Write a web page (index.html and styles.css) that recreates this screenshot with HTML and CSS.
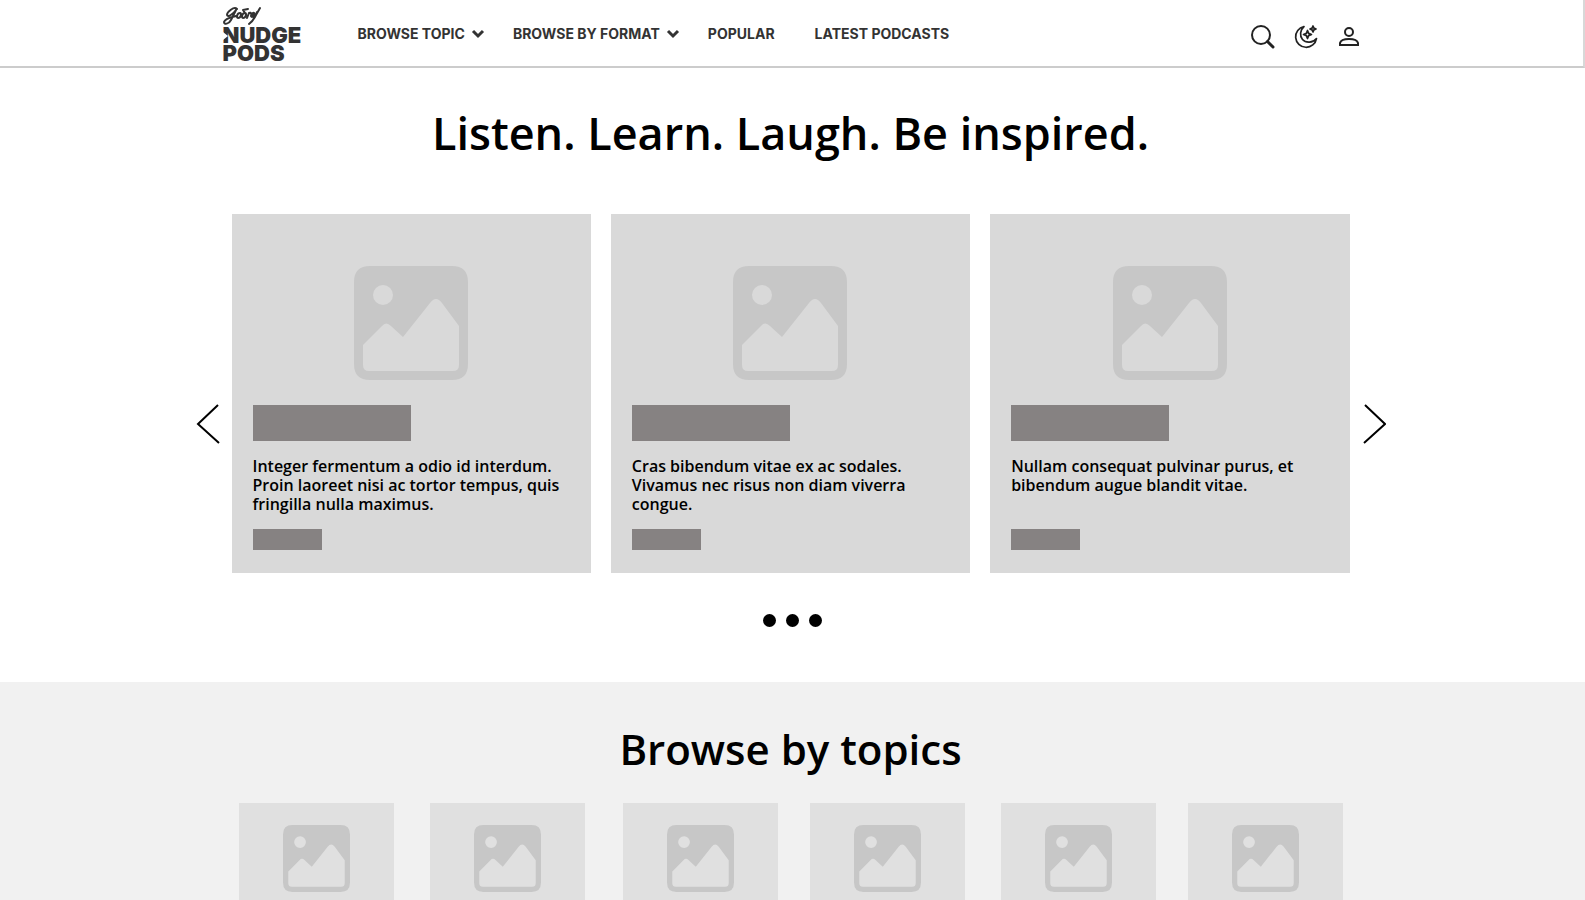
FILE: index.html
```html
<!DOCTYPE html>
<html lang="en">
<head>
<meta charset="utf-8">
<meta name="viewport" content="width=device-width, initial-scale=1">
<title>Nudge Pods</title>
<link rel="stylesheet" href="styles.css">
</head>
<body>
<svg class="defs" aria-hidden="true">
  <symbol id="picture" viewBox="0 0 114 114">
    <path fill="#c7c7c7" fill-rule="evenodd" d="M16 0H98Q114 0 114 16V98Q114 114 98 114H16Q0 114 0 98V16Q0 0 16 0ZM29 19a10 10 0 1 0 0 20a10 10 0 1 0 0-20ZM9 79L28 60Q32 55 37 60L49 71L76 37Q82 29 88 37L105 60V99Q105 105 99 105H15Q9 105 9 99Z"/>
  </symbol>
  <symbol id="caret" viewBox="0 0 14 10">
    <path d="M2 2L7 7L12 2" fill="none" stroke="#333" stroke-width="3"/>
  </symbol>
</svg>
<header class="header">
  <div class="header-inner">
    <a class="logo" href="#" aria-label="Godrej Nudge Pods">
      <svg class="signature" viewBox="0 0 38 20" aria-hidden="true">
        <path d="M14 3C11 0 4 6 4 9C5 12 11 7 13 4L8 14C6 18 1 19 1 16C2 12 9 11 13 10M17 7C14 7 13 12 15 12C18 12 19 7 17 7M22 7C19 7 18 12 20 12C23 12 24 7 22 7L20 4L25 3M24 12L26 7Q28 6 28 8M28 10Q32 8 31 7C29 6 27 11 29 11Q32 11 34 6M37 2L33 9Q30 15 26 18" fill="none" stroke="#333" stroke-width="2" stroke-linecap="round" stroke-linejoin="round"/>
      </svg>
      <span class="wordmark">NUDGE<br>PODS</span>
    </a>
    <nav class="nav" aria-label="Main">
      <button class="nav-item" type="button">BROWSE TOPIC <svg class="caret" aria-hidden="true"><use href="#caret"/></svg></button>
      <button class="nav-item" type="button">BROWSE BY FORMAT <svg class="caret" aria-hidden="true"><use href="#caret"/></svg></button>
      <a class="nav-item nav-link" href="#">POPULAR</a>
      <a class="nav-item nav-link" href="#">LATEST PODCASTS</a>
    </nav>
    <div class="tools">
      <button class="tool" type="button" aria-label="Search">
        <svg viewBox="0 0 24 24" aria-hidden="true"><circle cx="10" cy="10" r="9" fill="none" stroke="#222" stroke-width="2"/><path d="M16.500 16.500L22 22" stroke="#222" stroke-width="3" stroke-linecap="round"/></svg>
      </button>
      <button class="tool" type="button" aria-label="Dark mode">
        <svg viewBox="0 0 24 24" aria-hidden="true"><g fill="none" stroke="#222" stroke-width="1.700" stroke-linejoin="round"><path d="M10 1.500A10.500 10.500 0 1 0 22.500 13.500C19 18 12 18.500 8.500 14.500C5.500 11 6 5 10 1.500Z"/><path d="M13.500 5.500L14.600 8.400L17.500 9.500L14.600 10.600L13.500 13.500L12.400 10.600L9.500 9.500L12.400 8.400Z"/><path d="M19 1L19.900 3.100L22 4L19.900 4.900L19 7L18.100 4.900L16 4L18.100 3.100Z"/></g></svg>
      </button>
      <button class="tool" type="button" aria-label="Account">
        <svg viewBox="0 0 24 24" aria-hidden="true"><g fill="none" stroke="#222" stroke-width="2"><circle cx="12" cy="7" r="4"/><path d="M3 20V18Q4 14 12 14T21 18V20Z"/></g></svg>
      </button>
    </div>
  </div>
</header>
<main>
  <section class="featured">
    <h1 class="title">Listen. Learn. Laugh. Be inspired.</h1>
    <div class="carousel">
      <button class="arrow" type="button" aria-label="Previous"><svg viewBox="0 0 24 40" aria-hidden="true"><path d="M22 1L2 20L23 39" fill="none" stroke="#000" stroke-width="2"/></svg></button>
      <div class="cards">
        <article class="card">
          <svg class="card-picture" aria-hidden="true"><use href="#picture"/></svg>
          <div class="bar"></div>
          <p class="card-text">Integer fermentum a odio id interdum. Proin laoreet nisi ac tortor tempus, quis fringilla nulla maximus.</p>
          <div class="bar bar-small"></div>
        </article>
        <article class="card">
          <svg class="card-picture" aria-hidden="true"><use href="#picture"/></svg>
          <div class="bar"></div>
          <p class="card-text">Cras bibendum vitae ex ac sodales. Vivamus nec risus non diam viverra congue.</p>
          <div class="bar bar-small"></div>
        </article>
        <article class="card">
          <svg class="card-picture" aria-hidden="true"><use href="#picture"/></svg>
          <div class="bar"></div>
          <p class="card-text">Nullam consequat pulvinar purus, et bibendum augue blandit vitae.</p>
          <div class="bar bar-small"></div>
        </article>
      </div>
      <button class="arrow" type="button" aria-label="Next"><svg viewBox="0 0 24 40" aria-hidden="true"><path d="M3 1L23 20L2 39" fill="none" stroke="#000" stroke-width="2"/></svg></button>
    </div>
    <div class="dots">
      <button class="dot" type="button" aria-label="Slide 1"></button>
      <button class="dot" type="button" aria-label="Slide 2"></button>
      <button class="dot" type="button" aria-label="Slide 3"></button>
    </div>
  </section>
  <section class="topics">
    <h2 class="title title-small">Browse by topics</h2>
    <div class="topic-grid">
      <div class="topic"><svg class="topic-picture" aria-hidden="true"><use href="#picture"/></svg></div>
      <div class="topic"><svg class="topic-picture" aria-hidden="true"><use href="#picture"/></svg></div>
      <div class="topic"><svg class="topic-picture" aria-hidden="true"><use href="#picture"/></svg></div>
      <div class="topic"><svg class="topic-picture" aria-hidden="true"><use href="#picture"/></svg></div>
      <div class="topic"><svg class="topic-picture" aria-hidden="true"><use href="#picture"/></svg></div>
      <div class="topic"><svg class="topic-picture" aria-hidden="true"><use href="#picture"/></svg></div>
    </div>
  </section>
</main>
</body>
</html>
```
FILE: styles.css
```css
* { box-sizing: border-box; }
html { overflow: hidden; }
body {
  margin: 0;
  height: 100vh;
  overflow: hidden;
  background: #fff;
  color: #000;
  font-family: "Open Sans", sans-serif;
}
button { padding: 0; border: 0; background: none; font: inherit; color: inherit; cursor: pointer; }
.defs { display: none; }

.header { border-bottom: 2px solid #ccc; border-right: 2px solid #d8d8d8; }
.header-inner {
  display: flex;
  align-items: center;
  max-width: 1138px;
  height: 66px;
  margin: 0 auto;
}
.logo { width: 135px; padding-top: 2px; color: #333; text-decoration: none; }
.signature { display: block; width: 38px; height: 20px; }
.wordmark {
  display: block;
  position: relative;
  font: 900 22px/18px Inter, sans-serif;
}
/* Notch in the left stem of the N */
.wordmark::before {
  content: "";
  position: absolute;
  left: 0;
  top: 6px;
  border-left: 5px solid #fff;
  border-top: 4px solid transparent;
  border-bottom: 4px solid transparent;
}
.nav { display: flex; gap: 28px; flex: 1; padding-top: 1px; }
.nav-item {
  display: flex;
  align-items: center;
  gap: 6px;
  font: 700 14px/20px Inter, sans-serif;
  color: #333;
  text-decoration: none;
  white-space: nowrap;
}
.nav-link + .nav-link { margin-left: 12px; }
.caret { width: 14px; height: 10px; }
.tools { display: flex; gap: 19px; padding-top: 8px; }
.tool { width: 24px; height: 24px; }
.tool svg { display: block; width: 24px; height: 24px; }

.featured { padding: 31px 4px 55px 0; }
.title {
  margin: 0;
  text-align: center;
  font-size: 45px;
  line-height: 68px;
  font-weight: 600;
}
.carousel {
  display: flex;
  align-items: center;
  justify-content: center;
  gap: 12px;
  margin-top: 47px;
}
.arrow { width: 24px; height: 40px; margin-top: 60px; }
.arrow svg { display: block; width: 24px; height: 40px; }
.cards {
  display: grid;
  grid-template-columns: repeat(3, 1fr);
  gap: 20px;
  width: 1118px;
  max-width: 80%;
}
.card { padding: 52px 21px 23px; background: #d9d9d9; }
.card-picture { display: block; width: 114px; height: 114px; margin: 0 auto 25px; }
.bar { width: 158px; height: 36px; background: #868282; }
.bar-small { width: 69px; height: 21px; }
.card-text {
  min-height: 57px;
  margin: 16px 0 15px;
  font-size: 16px;
  line-height: 19px;
  font-weight: 600;
}
.dots { display: flex; justify-content: center; gap: 10px; margin: 41px 0 0 4px; }
.dot { width: 13px; height: 13px; border-radius: 50%; background: #000; }

.topics { padding: 33px 4px 40px 0; background: #f1f1f1; }
.title-small { font-size: 42px; }
.topic-grid {
  display: grid;
  grid-template-columns: 191fr 193fr 187fr 191fr 187fr 155fr;
  max-width: 1104px;
  margin: 20px auto 0;
}
.topic { width: 155px; height: 155px; padding-top: 22px; background: #e0e0e0; }
.topic-picture { display: block; width: 67px; height: 67px; margin: 0 auto; }
```
